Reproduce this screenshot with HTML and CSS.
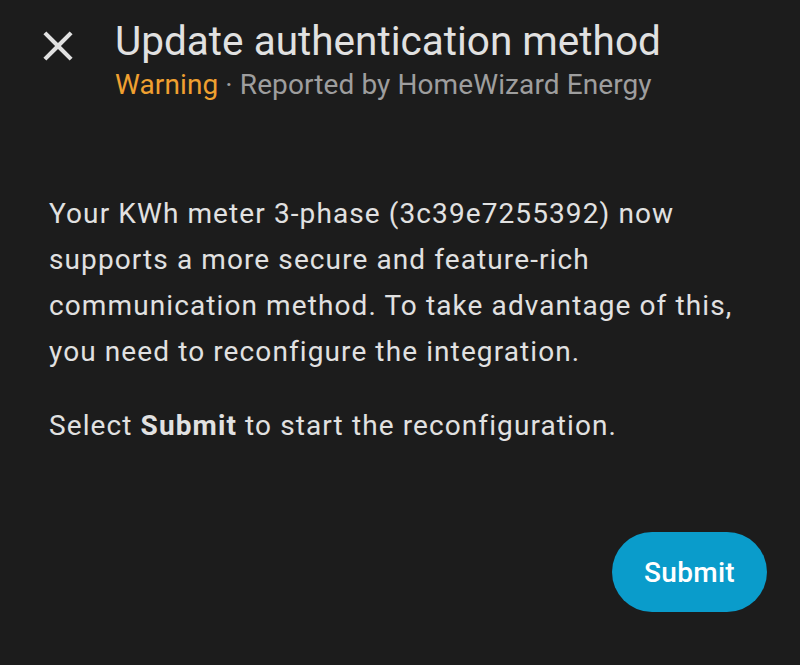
FILE: index.html
```html
<!DOCTYPE html>
<html lang="en">
<head>
  <meta charset="UTF-8" />
  <meta name="viewport" content="width=device-width, initial-scale=1.0"/>
  <title>Update authentication method</title>
  <link rel="stylesheet" href="styles.css">
</head>
<body>

  <div class="dialog">
    <div class="dialog-header">
      <button class="close-btn" aria-label="Close">
        <svg viewBox="0 0 24 24" width="50" height="50">
          <path d="M19,6.41L17.59,5L12,10.59L6.41,5L5,6.41L10.59,12L5,17.59L6.41,19L12,13.41L17.59,19L19,17.59L13.41,12L19,6.41Z" fill="currentColor"/>
        </svg>
      </button>
      <div class="titles">
        <h1>Update authentication method</h1>
        <div class="subtitle"><span class="severity">Warning</span> · Reported by HomeWizard Energy</div>
      </div>
    </div>

    <div class="dialog-content">
      <p>Your KWh meter 3-phase (3c39e7255392) now supports a more secure and feature-rich communication method. To take advantage of this, you need to reconfigure the integration.</p>
      <p>Select <strong>Submit</strong> to start the reconfiguration.</p>
    </div>

    <div class="dialog-actions">
      <button class="submit-btn">Submit</button>
    </div>
  </div>

</body>
</html>
```

FILE: styles.css
```css
body {
  font-family: Roboto, sans-serif;
  margin: 0;
  background: #1c1c1c;
  color: #e1e1e1;
}

.dialog {
  width: 800px;
  height: 665px;
  display: flex;
  flex-direction: column;
}

.dialog-header {
  display: flex;
  align-items: flex-start;
  padding: 16px 0 0 33px;
}

.close-btn {
  background: none;
  border: none;
  color: #e1e1e1;
  padding: 0;
  margin-top: 5px;
  width: 50px;
  height: 50px;
}

.close-btn svg {
  display: block;
}

.titles {
  margin-left: 32px;
}

.titles h1 {
  margin: 0;
  font-size: 40.5px;
  font-weight: 400;
  line-height: 50px;
  color: #e1e1e1;
}

.subtitle {
  font-size: 28px;
  line-height: 38px;
  letter-spacing: 0.1px;
  color: #9e9e9e;
}

.severity {
  color: #f0a030;
}

.dialog-content {
  padding: 0 49px;
  margin-top: 87px;
  font-size: 28px;
  line-height: 46px;
  letter-spacing: 1.1px;
}

.dialog-content p {
  margin: 0 0 28px;
}

.dialog-actions {
  display: flex;
  justify-content: flex-end;
  padding: 0 33px;
  margin-top: 55px;
}

.submit-btn {
  background: #0a9ccb;
  color: #fff;
  border: none;
  border-radius: 40px;
  height: 80px;
  padding: 0 32px;
  font-family: Roboto, sans-serif;
  font-size: 28px;
  font-weight: 500;
  letter-spacing: 0.3px;
}
```
